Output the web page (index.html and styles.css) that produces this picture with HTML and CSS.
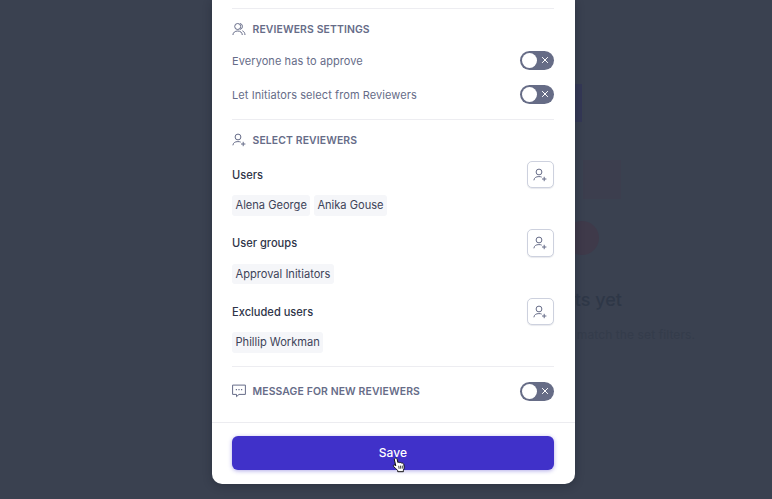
FILE: index.html
```html
<!DOCTYPE html>
<html lang="en">
<head>
    <meta charset="UTF-8">
    <meta name="viewport" content="width=device-width, initial-scale=1.0">
    <title>Reviewers</title>
    <link rel="stylesheet" href="styles.css">
</head>
<body>
    <!-- shared icons -->
    <svg class="icon_defs" width="0" height="0">
        <symbol id="icon_users" viewBox="0 0 14 14">
            <circle cx="5.7" cy="4.5" r="3"/>
            <path d="M8 1.5a3 3 0 0 1 0 5.9M.9 13c.2-2.5 2-4 4.8-4s4.4 1.5 4.6 4M10.4 8.8c1.5.6 2.5 2 2.6 4.2"/>
        </symbol>
        <symbol id="icon_user_add" viewBox="0 0 14 14">
            <circle cx="6" cy="4" r="2.9"/>
            <path d="M.9 12.3c.3-2.5 2-3.7 5-3.7 1.2 0 2 .1 2.8.5M11.2 8.8v4.4M9 11h4.4"/>
        </symbol>
        <symbol id="icon_message" viewBox="0 0 14 14">
            <path d="M.6 1.1h12.8v9.3H7L4.5 12.7V10.4H.6z"/>
            <path class="dots" d="M3.8 5.7h1.2M6.4 5.7h1.2M9 5.7h1.2"/>
        </symbol>
        <symbol id="icon_cross" viewBox="0 0 8 8">
            <path d="M1.1 1.1l5.8 5.8M6.9 1.1l-5.8 5.8"/>
        </symbol>
    </svg>

    <div class="page">
        <div class="shape square_blue"></div>
        <div class="shape square_red"></div>
        <div class="shape circle_red"></div>
        <div class="empty_title">No assets yet</div>
        <div class="empty_text">No assets match the set filters.</div>
    </div>

    <div class="modal">
        <div class="section settings">
            <h2><svg><use href="#icon_users"/></svg><span>REVIEWERS SETTINGS</span></h2>
            <div class="row">
                <span>Everyone has to approve</span>
                <button class="toggle"><i></i><svg><use href="#icon_cross"/></svg></button>
            </div>
            <div class="row">
                <span>Let Initiators select from Reviewers</span>
                <button class="toggle"><i></i><svg><use href="#icon_cross"/></svg></button>
            </div>
        </div>

        <div class="section select">
            <h2><svg><use href="#icon_user_add"/></svg><span>SELECT REVIEWERS</span></h2>
            <div class="group">
                <div class="group_head">
                    <span>Users</span>
                    <button class="add"><svg><use href="#icon_user_add"/></svg></button>
                </div>
                <div class="tags"><span>Alena George</span><span>Anika Gouse</span></div>
            </div>
            <div class="group">
                <div class="group_head">
                    <span>User groups</span>
                    <button class="add"><svg><use href="#icon_user_add"/></svg></button>
                </div>
                <div class="tags"><span>Approval Initiators</span></div>
            </div>
            <div class="group">
                <div class="group_head">
                    <span>Excluded users</span>
                    <button class="add"><svg><use href="#icon_user_add"/></svg></button>
                </div>
                <div class="tags"><span>Phillip Workman</span></div>
            </div>
        </div>

        <div class="section message">
            <h2><svg><use href="#icon_message"/></svg><span>MESSAGE FOR NEW REVIEWERS</span></h2>
            <button class="toggle"><i></i><svg><use href="#icon_cross"/></svg></button>
        </div>

        <div class="footer">
            <button class="save">Save</button>
        </div>
    </div>

    <svg class="cursor" viewBox="0 0 14 16">
        <path d="M3.2 1.3c.9-.5 1.7.1 1.9 1l.8 3.3c.6-.6 1.5-.5 1.9.2.6-.5 1.5-.3 1.9.4.9-.4 1.9.2 2.1 1.2l.4 2.6c.2 1.4-.5 2.3-.8 3.3v1.4H5.7v-1.3C4.3 12 2.6 10.9 1.5 9.3c-.6-1.1.6-1.9 1.6-1.1l.7.7-1.4-6c-.2-.7.1-1.3.8-1.6z"/>
        <path class="lines" d="M6.7 8.8l.4 3M8.5 8.7l.2 3M10.3 8.6v3"/>
    </svg>
</body>
</html>
```
FILE: styles.css
```css
body {
    font-family: Inter, sans-serif;
    background-color: #3a4150;
    width: 772px;
    height: 499px;
    margin: 0;
    overflow: hidden;
    position: relative;
}

.icon_defs {
    position: absolute;
}

svg {
    fill: none;
    stroke: currentColor;
}

button {
    font-family: inherit;
    box-sizing: border-box;
    border: none;
    padding: 0;
    cursor: pointer;
}

/* Dimmed page under the modal */
.page {
    position: absolute;
    inset: 0;
}

.shape {
    position: absolute;
}

.square_blue {
    left: 544px;
    top: 84px;
    width: 38px;
    height: 38px;
    background-color: #343856;
}

.square_red {
    left: 583px;
    top: 160px;
    width: 38px;
    height: 39px;
    background-color: #3c3e4e;
}

.circle_red {
    left: 565px;
    top: 221px;
    width: 34px;
    height: 34px;
    border-radius: 50%;
    background-color: #3f3a4a;
}

.empty_title,
.empty_text {
    position: absolute;
    white-space: nowrap;
}

.empty_title {
    right: 150px;
    top: 288px;
    font-size: 18px;
    line-height: 24px;
    font-weight: 500;
    color: #2e3747;
}

.empty_text {
    right: 77px;
    top: 326px;
    font-size: 12px;
    line-height: 17px;
    letter-spacing: 0.1px;
    color: #343c4b;
}

.modal {
    position: relative;
    box-sizing: border-box;
    width: 363px;
    height: 484px;
    margin-left: 211.5px;
    padding-top: 8px;
    background-color: #fff;
    border-radius: 0 0 10px 10px;
    box-shadow: 0 2px 8px rgba(20, 26, 38, 0.35);
}

.section {
    box-sizing: border-box;
    margin: 0 20.5px;
    border-top: 1px solid #ededf1;
    color: #666c88;
}

.settings {
    height: 111px;
    padding-top: 11px;
}

.settings h2 {
    margin-bottom: 5px;
}

.select {
    height: 247px;
    padding-top: 11px;
}

.select h2 {
    margin-bottom: 12px;
}

.message {
    display: flex;
    justify-content: space-between;
    align-items: center;
    height: 56px;
    padding-bottom: 7px;
}

h2 {
    display: flex;
    align-items: center;
    gap: 6.5px;
    height: 18px;
    margin: 0;
    font-size: 10.4px;
    font-weight: 600;
    letter-spacing: 0.13px;
}

h2 svg {
    width: 14px;
    height: 14px;
}

.row {
    display: flex;
    justify-content: space-between;
    align-items: center;
    height: 34.3px;
    font-size: 11px;
    letter-spacing: 0.08px;
}

.row span {
    padding-top: 1.5px;
}

.toggle {
    display: flex;
    align-items: center;
    gap: 4px;
    width: 34px;
    height: 19px;
    padding-left: 2px;
    border-radius: 10px;
    background-color: #666c86;
    color: #fff;
}

.toggle i {
    width: 15px;
    height: 15px;
    border-radius: 50%;
    background-color: #fff;
}

.toggle svg {
    width: 8px;
    height: 8px;
}

.group {
    height: 68.5px;
}

.group_head {
    display: flex;
    justify-content: space-between;
    align-items: center;
    height: 27px;
    font-size: 11.1px;
    font-weight: 500;
    color: #2f3549;
}

.add {
    display: flex;
    justify-content: center;
    align-items: center;
    width: 27.5px;
    height: 27.5px;
    border: 1px solid #cdd1de;
    border-radius: 5px;
    background-color: #fff;
    box-shadow: 0 1px 1px rgba(102, 108, 136, 0.15);
    color: #666c88;
}

.add svg {
    width: 14px;
    height: 14px;
}

.tags {
    display: flex;
    gap: 3.5px;
    margin-top: 7px;
    font-size: 11.1px;
    line-height: 19.5px;
    color: #3d4358;
}

.tags span {
    padding: 1px 3.5px 0;
    border-radius: 3px;
    background-color: #f5f6f9;
}

.dots {
    stroke-width: 1.3;
}

.footer {
    padding: 13px 20.5px 0;
    border-top: 1px solid #ececf0;
}

.save {
    display: block;
    width: 100%;
    height: 34px;
    padding-bottom: 1px;
    border-radius: 6px;
    background-color: #4031c9;
    box-shadow: 0 1px 4px rgba(64, 49, 201, 0.4);
    color: #fff;
    font-size: 12px;
    font-weight: 500;
    letter-spacing: 0.1px;
}

.cursor {
    position: absolute;
    left: 392px;
    top: 457px;
    width: 14px;
    height: 16px;
    fill: #fff;
    stroke: #111;
}

.lines {
    stroke-width: 0.8;
}
```
